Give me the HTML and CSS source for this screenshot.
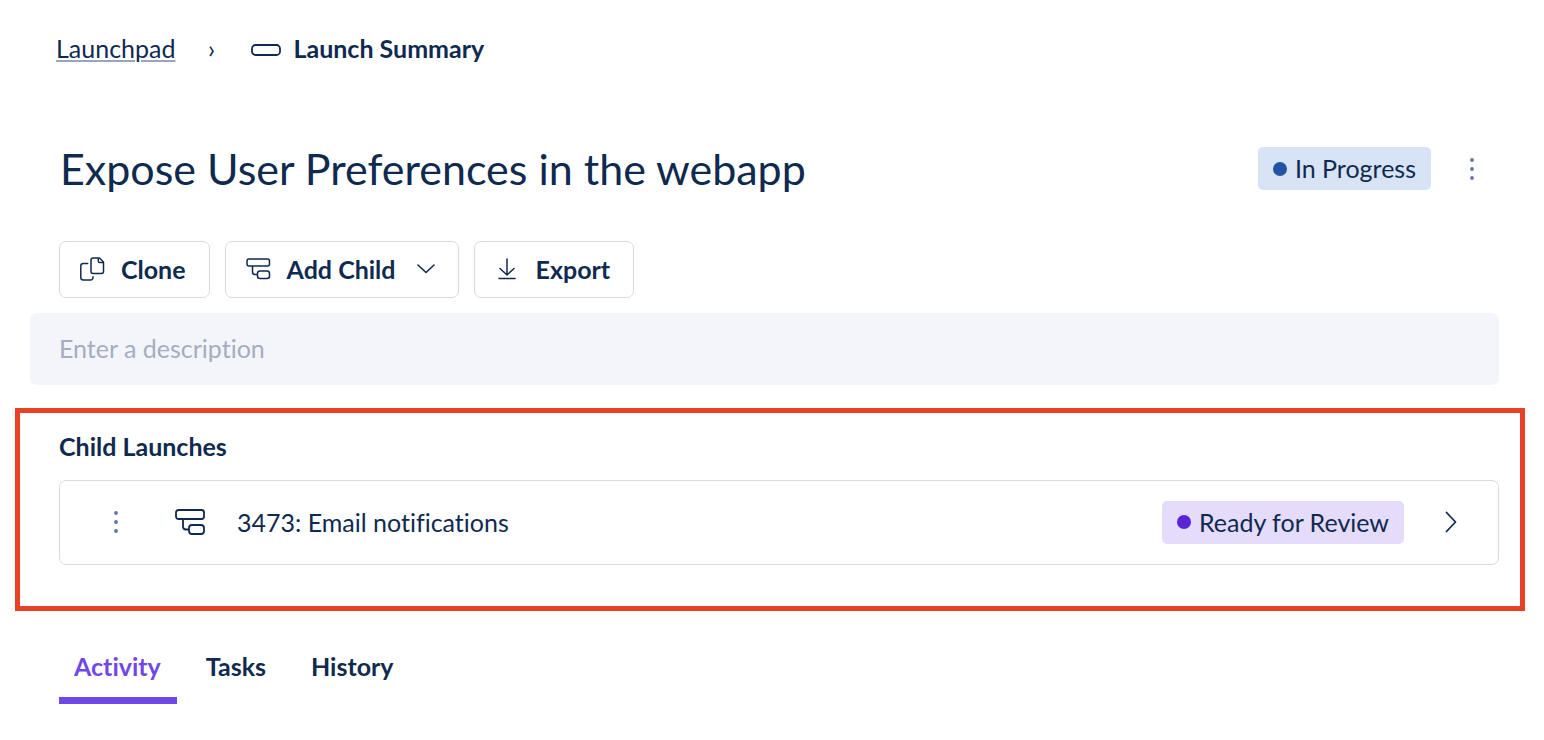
FILE: index.html
```html
<!DOCTYPE html>
<html lang="en">

<head>
    <meta charset="UTF-8">
    <title>Launch Summary</title>
    <link rel="stylesheet" href="styles.css">
</head>

<body>
    <nav class="breadcrumb" aria-label="Breadcrumb">
        <a class="crumb-link" href="#">Launchpad</a>
        <span class="crumb-sep">›</span>
        <span class="crumb-current">
            <svg class="icon" width="30" height="14" viewBox="0 0 30 14" fill="none" stroke="currentColor" stroke-width="1.8">
                <rect x="1" y="3" width="28" height="10" rx="3.5" />
            </svg>
            Launch Summary
        </span>
    </nav>

    <main class="launch">
        <header class="launch-header">
            <h1>Expose User Preferences in the webapp</h1>
            <span class="status status-progress">In Progress</span>
            <button class="icon-btn" type="button" aria-label="More actions">
                <svg class="dots" width="4" height="22" viewBox="0 0 4 22" fill="currentColor">
                    <circle cx="2" cy="2" r="1.9" />
                    <circle cx="2" cy="11" r="1.9" />
                    <circle cx="2" cy="20" r="1.9" />
                </svg>
            </button>
        </header>

        <div class="toolbar">
            <button class="btn" type="button">
                <svg class="icon" width="25" height="24" viewBox="0 0 25 24" fill="none" stroke="currentColor" stroke-width="1.5" stroke-linejoin="round">
                    <path d="M13 1h6.500l4 4v9.500a2 2 0 0 1-2 2H13a2 2 0 0 1-2-2V3a2 2 0 0 1 2-2z" />
                    <path d="M18.300 1.200v3a1.400 1.400 0 0 0 1.400 1.400h3.600" />
                    <path d="M8.300 6.500H3.300a2.500 2.500 0 0 0-2.500 2.500v11.500a2.500 2.500 0 0 0 2.500 2.500h7.200a2.500 2.500 0 0 0 2.500-2.500v-1.200" />
                </svg>
                Clone
            </button>
            <button class="btn" type="button">
                <svg class="icon" width="25" height="22" viewBox="0 0 25 22" fill="none" stroke="currentColor" stroke-width="1.5">
                    <rect x="1" y="1" width="22.500" height="7" rx="2" />
                    <rect x="11.500" y="13" width="12" height="7.500" rx="2.500" />
                    <path d="M6.500 8v6a2.500 2.500 0 0 0 2.500 2.500h2.500" />
                </svg>
                Add Child
                <svg class="caret" width="18" height="10" viewBox="0 0 18 10" fill="none" stroke="currentColor" stroke-width="1.6" stroke-linecap="round" stroke-linejoin="round">
                    <path d="M1 1l8 7.500L17 1" />
                </svg>
            </button>
            <button class="btn" type="button">
                <svg class="icon" width="25" height="22" viewBox="0 0 25 22" fill="none" stroke="currentColor" stroke-width="1.5" stroke-linecap="round" stroke-linejoin="round">
                    <path d="M12 1v16M5 10.500l7 6.500 7-6.500M4 20.500h16" />
                </svg>
                Export
            </button>
        </div>

        <input class="description" type="text" placeholder="Enter a description" aria-label="Description">

        <section class="children">
            <h2>Child Launches</h2>
            <div class="child">
                <button class="icon-btn" type="button" aria-label="Child actions">
                    <svg class="dots" width="4" height="22" viewBox="0 0 4 22" fill="currentColor">
                        <circle cx="2" cy="2" r="1.9" />
                        <circle cx="2" cy="11" r="1.9" />
                        <circle cx="2" cy="20" r="1.9" />
                    </svg>
                </button>
                <svg class="icon" width="30" height="26" viewBox="0 0 30 26" fill="none" stroke="currentColor" stroke-width="1.8">
                    <rect x="1" y="1" width="28" height="9" rx="2.500" />
                    <rect x="14" y="16" width="15" height="9" rx="3" />
                    <path d="M8 10v7.500a3 3 0 0 0 3 3h3" />
                </svg>
                <a class="child-name" href="#">3473: Email notifications</a>
                <span class="status status-review">Ready for Review</span>
                <button class="open-btn" type="button" aria-label="Open child launch">
                    <svg width="12" height="22" viewBox="0 0 12 22" fill="none" stroke="currentColor" stroke-width="1.8" stroke-linecap="round" stroke-linejoin="round">
                        <path d="M1.500 1.500l9 9.500-9 9.500" />
                    </svg>
                </button>
            </div>
        </section>

        <div class="tabs" role="tablist">
            <button class="tab on" type="button" role="tab" aria-selected="true">Activity</button>
            <button class="tab" type="button" role="tab" aria-selected="false">Tasks</button>
            <button class="tab" type="button" role="tab" aria-selected="false">History</button>
        </div>
    </main>
</body>

</html>
```
FILE: styles.css
```css
* {
    box-sizing: border-box;
    margin: 0;
    padding: 0;
}

body {
    background: #fff;
    color: #0f2a50;
    font-family: Lato, "Liberation Sans", sans-serif;
    font-size: 25px;
    line-height: 31px;
    font-variant-ligatures: none;
}

button,
input {
    font: inherit;
    font-variant-ligatures: inherit;
    color: inherit;
    border: 0;
    background: none;
}

button {
    cursor: pointer;
}

svg {
    display: block;
    flex: none;
}

.breadcrumb {
    display: flex;
    align-items: center;
    padding: 33px 56px 0;
}

.crumb-link {
    color: inherit;
    text-decoration-color: #97a5bd;
    text-decoration-thickness: 2px;
    text-underline-offset: 2px;
}

.crumb-sep {
    width: 76px;
    padding-right: 4px;
    text-align: center;
}

.crumb-current {
    display: flex;
    align-items: center;
    gap: 12px;
    font-weight: 700;
}

.launch {
    padding: 77px 19px 0 15px;
}

.launch-header {
    display: flex;
    align-items: center;
    padding: 0 26px 0 45px;
}

.launch-header h1 {
    flex: 1;
    font-size: 43px;
    font-weight: 400;
    line-height: 55px;
}

.status {
    display: flex;
    align-items: center;
    gap: 8px;
    height: 43px;
    padding: 0 15px;
    border-radius: 5px;
}

.status::before {
    content: "";
    width: 14px;
    height: 14px;
    border-radius: 50%;
}

.status-progress {
    background: #d8e4f5;
}

.status-progress::before {
    background: #2354a3;
}

.status-review {
    background: #e5dbfb;
}

.status-review::before {
    background: #5b24d6;
}

.icon-btn {
    display: flex;
    justify-content: center;
    padding: 10px 0;
    width: 28px;
    color: #5b76a8;
}

.launch-header .icon-btn {
    margin-left: 27px;
    margin-right: 13px;
}

.toolbar {
    display: flex;
    gap: 15px;
    padding: 45px 44px 15px;
}

.btn {
    display: flex;
    align-items: center;
    gap: 16px;
    height: 57px;
    padding: 0 23px 1px 20px;
    border: 1px solid #d5daea;
    border-radius: 7px;
    font-weight: 700;
}

.caret {
    margin: 0 0 0 5px;
}

.description {
    display: block;
    width: calc(100% - 41px);
    height: 72px;
    margin-left: 15px;
    padding: 0 29px 2px;
    border-radius: 7px;
    background: #f4f5fb;
}

.description::placeholder {
    color: #a3aec2;
    opacity: 1;
}

.children {
    margin-top: 23px;
    padding: 18px 21px 41px 39px;
    border: 5px solid #ea4025;
}

.children h2 {
    font-size: 25px;
    font-weight: 700;
}

.child {
    display: flex;
    align-items: center;
    height: 85px;
    margin-top: 18px;
    padding: 0 41px 1px 42px;
    border: 1px solid #d5daea;
    border-radius: 7px;
}

.child .icon {
    margin: 0 32px 0 45px;
}

.child-name {
    flex: 1;
    color: inherit;
    text-decoration: none;
}

.open-btn {
    padding: 10px 0;
    margin-left: 41px;
}

.tabs {
    display: flex;
    gap: 14px;
    padding: 40px 44px 0;
}

.tab {
    padding: 0 16px 15px 15px;
    border-bottom: 7px solid transparent;
    font-weight: 700;
}

.tab.on {
    color: #7048e8;
    border-bottom-color: #7048e8;
}
```
